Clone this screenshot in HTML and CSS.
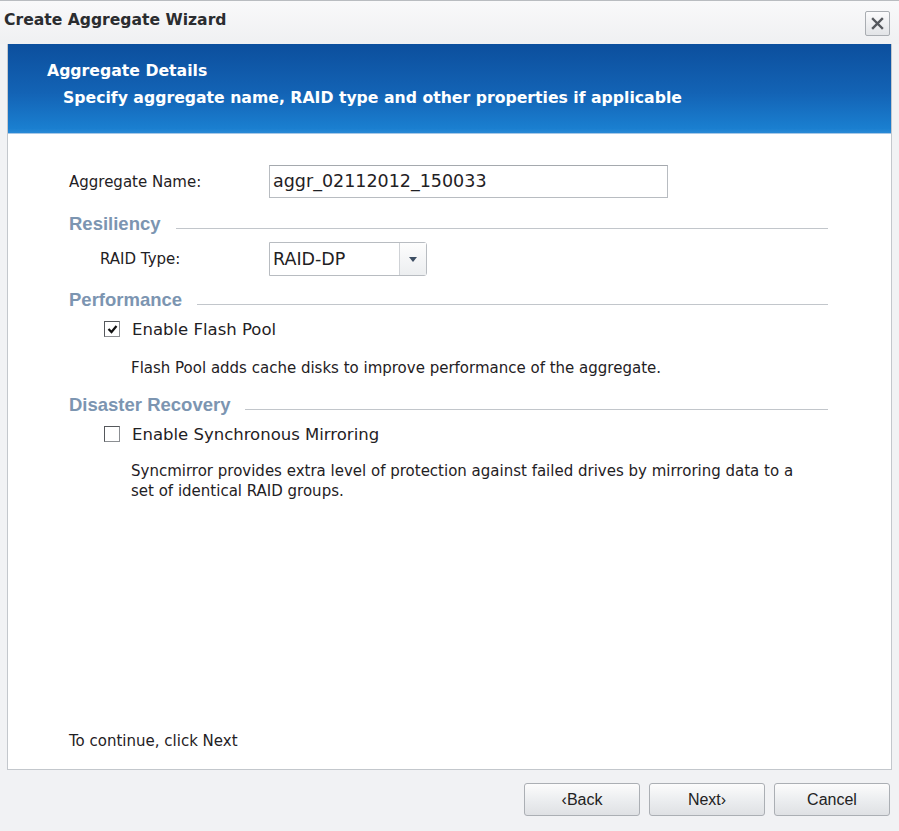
FILE: index.html
```html
<!DOCTYPE html>
<html lang="en">
<head>
    <meta charset="UTF-8">
    <title>Create Aggregate Wizard</title>
    <link rel="stylesheet" href="styles.css">
</head>
<body>
    <div class="wizard">
        <div class="titlebar">
            <span class="title">Create Aggregate Wizard</span>
            <button class="close-btn" aria-label="Close">
                <svg width="13" height="13" viewBox="0 0 13 13">
                    <path d="M2 2 L11 11 M11 2 L2 11" stroke="#55585d" stroke-width="2.4" stroke-linecap="square"/>
                </svg>
            </button>
        </div>

        <div class="panel">
            <div class="banner">
                <div class="banner-title">Aggregate Details</div>
                <div class="banner-sub">Specify aggregate name, RAID type and other properties if applicable</div>
            </div>

            <div class="panel-body">
                <div class="field-row name-row">
                    <label class="field-label">Aggregate Name:</label>
                    <div class="text-input">aggr_02112012_150033</div>
                </div>

                <!-- Resiliency -->
                <div class="section-head resiliency">
                    <span>Resiliency</span>
                    <div class="rule"></div>
                </div>
                <div class="field-row raid-row">
                    <label class="field-label indent">RAID Type:</label>
                    <div class="select">
                        <span class="select-value">RAID-DP</span>
                        <span class="select-btn">
                            <svg width="8" height="5" viewBox="0 0 8 5"><path d="M0 0 H8 L4 5 Z" fill="#3d4e63"/></svg>
                        </span>
                    </div>
                </div>

                <!-- Performance -->
                <div class="section-head performance">
                    <span>Performance</span>
                    <div class="rule"></div>
                </div>
                <div class="check-row flash-row">
                    <span class="checkbox">
                        <svg width="11" height="11" viewBox="0 0 11 11"><path d="M1.5 5 L4.5 8 L9.5 2" fill="none" stroke="#111" stroke-width="2.2"/></svg>
                    </span>
                    <span class="check-label">Enable Flash Pool</span>
                </div>
                <p class="desc flash-desc">Flash Pool adds cache disks to improve performance of the aggregate.</p>

                <!-- Disaster Recovery -->
                <div class="section-head disaster">
                    <span>Disaster Recovery</span>
                    <div class="rule"></div>
                </div>
                <div class="check-row mirror-row">
                    <span class="checkbox"></span>
                    <span class="check-label">Enable Synchronous Mirroring</span>
                </div>
                <p class="desc mirror-desc">Syncmirror provides extra level of protection against failed drives by mirroring data to a<br>set of identical RAID groups.</p>

                <div class="hint">To continue, click Next</div>
            </div>
        </div>

        <div class="footer">
            <button class="btn">&lsaquo;Back</button>
            <button class="btn">Next&rsaquo;</button>
            <button class="btn">Cancel</button>
        </div>
    </div>
</body>
</html>
```

FILE: styles.css
```css
:root {
    --window-bg: #f1f2f4;
    --border: #c3c7cc;
    --heading: #7c95b1;
    --text: #1f2124;
}

body {
    margin: 0;
    font-family: 'DejaVu Sans', Verdana, sans-serif;
    color: var(--text);
}

.wizard {
    width: 899px;
    height: 831px;
    box-sizing: border-box;
    background-color: var(--window-bg);
    border-top: 1px solid #b9bcc0;
    display: flex;
    flex-direction: column;
}

.titlebar {
    height: 43px;
    display: flex;
    justify-content: space-between;
    align-items: center;
    padding: 0 9px 0 4px;
    background: linear-gradient(#f9f9fa, #eff0f2);
}

.title {
    font-weight: bold;
    font-size: 15.6px;
    color: #2b2d30;
    margin-top: -5px;
}

.close-btn {
    width: 25px;
    height: 25px;
    padding: 0;
    border: 1px solid #a9adb2;
    border-radius: 2px;
    background: linear-gradient(#fbfbfc, #e2e4e7);
    display: flex;
    align-items: center;
    justify-content: center;
    margin-top: 1px;
}

.panel {
    margin: 0 7px;
    height: 725px;
    border: 1px solid var(--border);
    border-top: none;
    background-color: #fff;
    display: flex;
    flex-direction: column;
}

.banner {
    height: 90px;
    box-sizing: border-box;
    padding: 15px 0 0 39px;
    background: linear-gradient(#0c4f9d, #1363b5 55%, #1a7fd0 95%, #2a8ad6);
    color: #fff;
    font-weight: bold;
    font-size: 15.7px;
    border-bottom: 1px solid #a8c8e6;
}

.banner-title {
    line-height: 24px;
}

.banner-sub {
    line-height: 24px;
    padding-left: 16px;
    margin-top: 3px;
}

.panel-body {
    flex: 1;
    display: flex;
    flex-direction: column;
    padding: 31px 63px 18px 61px;
}

.field-row {
    display: flex;
    align-items: center;
}

.field-label {
    width: 200px;
    font-size: 15px;
}

.field-label.indent {
    padding-left: 31px;
    width: 169px;
}

.text-input {
    width: 394px;
    height: 31px;
    border: 1px solid #b8bcc1;
    border-top-color: #a5a9ae;
    padding-left: 3px;
    font-size: 17.5px;
    line-height: 31px;
}

.section-head {
    display: flex;
    align-items: center;
    height: 22px;
    font-family: 'Liberation Sans', Arial, sans-serif;
    font-weight: bold;
    font-size: 18.5px;
    color: var(--heading);
}

.section-head .rule {
    flex: 1;
    height: 1px;
    background-color: #c2c6cb;
    margin: 8px 0 0 15px;
}

.resiliency { margin-top: 15px; }
.raid-row { margin-top: 7px; }
.performance { margin-top: 13px; }
.disaster { margin-top: 16px; }

.select {
    width: 156px;
    height: 32px;
    border: 1px solid #b8bcc1;
    border-radius: 0 3px 3px 0;
    display: flex;
}

.select-value {
    flex: 1;
    padding-left: 3px;
    font-size: 17.5px;
    line-height: 32px;
}

.select-btn {
    width: 26px;
    border-left: 1px solid #cfd2d6;
    background: linear-gradient(#fdfdfd, #eceef0);
    display: flex;
    align-items: center;
    justify-content: center;
}

.check-row {
    display: flex;
    align-items: center;
    height: 22px;
    padding-left: 35px;
}

.flash-row { margin-top: 7px; }
.mirror-row { margin-top: 7px; }

.checkbox {
    width: 14px;
    height: 14px;
    border: 1px solid #8b8e92;
    border-top-color: #55585c;
    border-left-color: #55585c;
    background-color: #fff;
    display: flex;
    align-items: center;
    justify-content: center;
}

.check-label {
    font-size: 16.5px;
    margin-left: 12px;
}

.desc {
    margin: 0;
    padding-left: 62px;
    font-size: 15px;
    line-height: 20px;
}

.flash-desc { margin-top: 18px; }
.mirror-desc { margin-top: 16px; }

.hint {
    margin-top: auto;
    font-size: 15px;
    line-height: 20px;
}

.footer {
    flex: 1;
    display: flex;
    justify-content: flex-end;
    align-items: flex-start;
    gap: 9px;
    padding: 13px 9px 0 0;
}

.btn {
    width: 116px;
    height: 33px;
    border: 1px solid #abafb4;
    border-radius: 3px;
    background: linear-gradient(#fcfcfc, #eceef0 50%, #dfe1e4);
    font-family: 'Liberation Sans', Arial, sans-serif;
    font-size: 16px;
    color: #222;
}
```
